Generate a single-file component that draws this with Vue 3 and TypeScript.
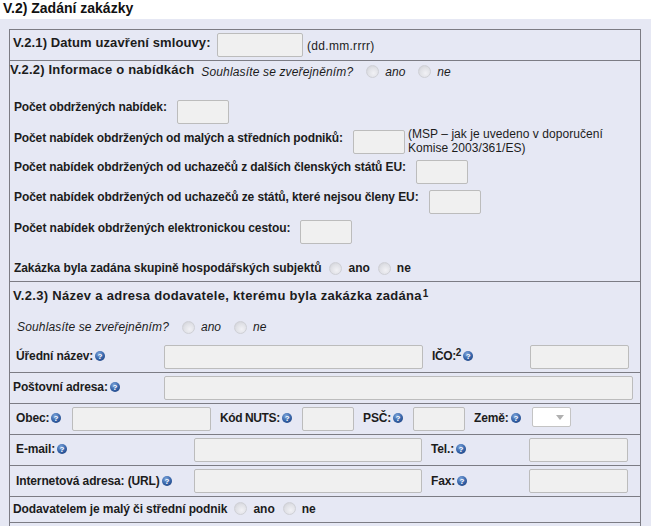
<script setup lang="ts">
const countRows = [
  { label: "Počet obdržených nabídek:" },
  { label: "Počet nabídek obdržených od malých a středních podniků:", note: true },
  { label: "Počet nabídek obdržených od uchazečů z dalších členských států EU:" },
  { label: "Počet nabídek obdržených od uchazečů ze států, které nejsou členy EU:" },
  { label: "Počet nabídek obdržených elektronickou cestou:" },
];
</script>

<template>
  <div class="page">
    <h2 class="title">V.2) Zadání zakázky</h2>
    <div class="panel">
      <div class="table">
        <div class="row row-date">
          <b class="head">V.2.1) Datum uzavření smlouvy:</b>
          <span class="field w86"></span>
          <span class="hint">(dd.mm.rrrr)</span>
        </div>

        <div class="row row-offers">
          <div class="offers-head">
            <b class="head">V.2.2) Informace o nabídkách</b>
            <i class="consent">Souhlasíte se zveřejněním?</i>
            <span class="radio r1"></span><i class="opt">ano</i>
            <span class="radio r2"></span><i class="opt">ne</i>
          </div>
          <div v-for="r in countRows" :key="r.label" class="count-row">
            <b class="count-label">{{ r.label }}</b>
            <span class="field w52"></span>
            <span v-if="r.note" class="note">(MSP – jak je uvedeno v doporučení<br />Komise 2003/361/ES)</span>
          </div>
          <div class="group-row">
            <b>Zakázka byla zadána skupině hospodářských subjektů</b>
            <span class="radio g1"></span><b class="opt">ano</b>
            <span class="radio g2"></span><b class="opt">ne</b>
          </div>
        </div>

        <div class="row row-name">
          <div class="name-head">
            <b class="head">V.2.3) Název a adresa dodavatele, kterému byla zakázka zadána</b><sup class="sup">1</sup>
          </div>
          <div class="name-consent">
            <i>Souhlasíte se zveřejněním?</i>
            <span class="radio n1"></span><i class="opt">ano</i>
            <span class="radio n2"></span><i class="opt">ne</i>
          </div>
          <div class="line">
            <b class="lbl l-name">Úřední název:<svg class="help" viewBox="0 0 10 10"><use href="#help" /></svg></b>
            <span class="field w259"></span>
            <b class="lbl l-ico">IČO:<sup class="sup-small">2</sup><svg class="help" viewBox="0 0 10 10"><use href="#help" /></svg></b>
            <span class="field w99"></span>
          </div>
        </div>

        <div class="row line-row">
          <b class="lbl l-post">Poštovní adresa:<svg class="help" viewBox="0 0 10 10"><use href="#help" /></svg></b>
          <span class="field w469"></span>
        </div>

        <div class="row line-row">
          <b class="lbl l-city">Obec:<svg class="help" viewBox="0 0 10 10"><use href="#help" /></svg></b>
          <span class="field w139"></span>
          <b class="lbl l-nuts">Kód NUTS:<svg class="help" viewBox="0 0 10 10"><use href="#help" /></svg></b>
          <span class="field w52"></span>
          <b class="lbl l-psc">PSČ:<svg class="help" viewBox="0 0 10 10"><use href="#help" /></svg></b>
          <span class="field w52"></span>
          <b class="lbl l-land">Země:<svg class="help" viewBox="0 0 10 10"><use href="#help" /></svg></b>
          <span class="select"><span class="arrow"></span></span>
        </div>

        <div class="row line-row">
          <b class="lbl l-mail">E-mail:<svg class="help" viewBox="0 0 10 10"><use href="#help" /></svg></b>
          <span class="field w228"></span>
          <b class="lbl l-tel">Tel.:<svg class="help" viewBox="0 0 10 10"><use href="#help" /></svg></b>
          <span class="field w99"></span>
        </div>

        <div class="row line-row">
          <b class="lbl l-url">Internetová adresa: (URL)<svg class="help" viewBox="0 0 10 10"><use href="#help" /></svg></b>
          <span class="field w228"></span>
          <b class="lbl l-fax">Fax:<svg class="help" viewBox="0 0 10 10"><use href="#help" /></svg></b>
          <span class="field w99"></span>
        </div>

        <div class="row row-small">
          <b class="small-text">Dodavatelem je malý či střední podnik</b>
          <span class="radio s1"></span><b class="opt">ano</b>
          <span class="radio s2"></span><b class="opt">ne</b>
        </div>

        <div class="row row-last"></div>
      </div>
    </div>

    <svg class="defs" width="0" height="0">
      <defs>
        <radialGradient id="helpFill" cx="40%" cy="30%" r="75%">
          <stop offset="0" stop-color="#7fa6dc" />
          <stop offset="0.6" stop-color="#3a68ac" />
          <stop offset="1" stop-color="#1f4585" />
        </radialGradient>
        <g id="help">
          <circle cx="5" cy="5" r="5" fill="url(#helpFill)" />
          <text x="5" y="8" text-anchor="middle" font-size="8" font-weight="700" font-family="Liberation Sans, sans-serif" fill="#fff">?</text>
        </g>
      </defs>
    </svg>
  </div>
</template>

<style>
html,
body {
  margin: 0;
  overflow: hidden;
  background: #fff;
}
</style>

<style scoped>
.page {
  width: 659px;
  height: 526px;
  overflow: hidden;
  font-family: "Liberation Sans", Arial, sans-serif;
  font-size: 12px;
  color: #1c1c1c;
}

.title {
  margin: 0;
  height: 19px;
  padding-left: 3px;
  font-size: 14px;
  line-height: 17px;
  color: #111;
}

.panel {
  width: 651px;
  height: 507px;
  padding: 10px 0 0 9px;
  box-sizing: border-box;
  background: #e6e8f4;
}

.table {
  width: 632px;
  border: 1px solid #7c7c84;
  border-bottom: 0;
  box-sizing: border-box;
}

.row {
  border-bottom: 1px solid #7c7c84;
  box-sizing: border-box;
}

.row-date {
  height: 31px;
  display: flex;
  align-items: flex-start;
  padding: 3px 0 0 3px;
}

.head {
  font-size: 13px;
  line-height: 18px;
  letter-spacing: 0.3px;
}

.row-date .head {
  padding-top: 1px;
  letter-spacing: 0.1px;
  width: 204px;
}

.offers-head .head {
  letter-spacing: 0.2px;
}

.hint {
  margin: 6px 0 0 4px;
  line-height: 15px;
  letter-spacing: 0.3px;
}

.field {
  display: block;
  flex: none;
  height: 24px;
  box-sizing: border-box;
  background: #f0f0f0;
  border: 1px solid #bcbcbc;
  border-radius: 2px;
}

.w52 { width: 52px; }
.w86 { width: 86px; }
.w99 { width: 99px; }
.w139 { width: 139px; }
.w228 { width: 228px; }
.w259 { width: 259px; }
.w469 { width: 469px; }

.row-offers {
  height: 221px;
}

.offers-head {
  display: flex;
  align-items: center;
  height: 17px;
  margin-bottom: 22px;
}

.consent {
  margin-left: 7px;
  letter-spacing: 0.15px;
}

.offers-head .consent,
.offers-head .radio,
.offers-head .opt {
  margin-top: 4px;
}

.radio {
  flex: none;
  display: block;
  width: 13px;
  height: 13px;
  box-sizing: border-box;
  border-radius: 50%;
  background: radial-gradient(circle at 60% 65%, #f1f1f5 0, #e0e1e6 55%, #cbccd2 100%);
  border: 1px solid #cfd0d6;
}

.opt {
  margin-left: 6px;
}

.r1 { margin-left: 13px; }
.r2 { margin-left: 13px; }

.count-row {
  display: flex;
  align-items: flex-start;
  height: 30px;
  padding-left: 4px;
}

.count-label {
  line-height: 15px;
  margin-right: 10px;
  letter-spacing: -0.13px;
}

.count-row:nth-child(3) .count-label,
.count-row:nth-child(6) .count-label {
  padding-top: 1px;
}

.count-row:nth-child(4) .count-label { letter-spacing: -0.115px; }
.count-row:nth-child(5) .count-label { letter-spacing: -0.1px; }
.count-row:nth-child(6) .count-label { letter-spacing: -0.065px; }

.note {
  margin-left: 3px;
  margin-top: -3px;
  line-height: 14px;
  letter-spacing: 0.05px;
}

.group-row {
  display: flex;
  align-items: center;
  height: 16px;
  margin-top: 10px;
  padding-left: 4px;
}

.group-row b:first-child {
  letter-spacing: -0.08px;
}

.g1 { margin-left: 8px; }
.g2 { margin-left: 8px; }

.row-name {
  height: 91px;
}

.name-head {
  height: 24px;
  padding: 5px 0 0 3px;
  box-sizing: border-box;
  display: flex;
  align-items: flex-start;
}

.sup {
  font-size: 10px;
  line-height: 10px;
  font-weight: 700;
  margin-top: 2px;
  margin-left: 1px;
}

.name-consent {
  display: flex;
  align-items: center;
  height: 16px;
  margin: 13px 0 10px 7px;
}

.name-consent > i:first-child {
  letter-spacing: 0.15px;
}

.n1 { margin-left: 13px; }
.n2 { margin-left: 13px; }

.line {
  display: flex;
  align-items: flex-start;
  height: 24px;
}

.line-row {
  height: 31px;
  padding-top: 3px;
  display: flex;
  align-items: flex-start;
}

.lbl {
  flex: none;
  display: flex;
  align-items: center;
  box-sizing: border-box;
  height: 15px;
  margin-top: 3px;
  white-space: nowrap;
  letter-spacing: -0.12px;
}

.help {
  width: 10px;
  height: 10px;
  margin-left: 2px;
  flex: none;
}

.sup-small {
  font-size: 10px;
  line-height: 9px;
  align-self: flex-start;
  font-weight: 700;
}

.l-name { width: 154px; padding-left: 6px; }
.l-ico { width: 107px; padding-left: 9px; letter-spacing: -0.4px; }
.l-post { width: 154px; padding-left: 3px; }
.l-city { width: 62px; padding-left: 6px; }
.l-nuts { width: 91px; padding-left: 9px; letter-spacing: -0.4px; }
.l-psc { width: 59px; padding-left: 9px; }
.l-land { width: 67px; padding-left: 9px; }
.l-mail { width: 184px; padding-left: 6px; }
.l-url { width: 184px; padding-left: 6px; margin-top: 4px; }
.l-tel { width: 107px; padding-left: 9px; }
.l-fax { width: 107px; padding-left: 9px; margin-top: 4px; }

.select {
  display: block;
  flex: none;
  width: 39px;
  height: 20px;
  box-sizing: border-box;
  background: #fff;
  border: 1px solid #c4c4c4;
  border-radius: 2px;
  position: relative;
}

.arrow {
  position: absolute;
  right: 6px;
  top: 7px;
  border-left: 4px solid transparent;
  border-right: 4px solid transparent;
  border-top: 5px solid #b0b0b0;
}

.row-small {
  height: 26px;
  display: flex;
  align-items: center;
  padding: 0 0 2px 3px;
}

.small-text {
  letter-spacing: -0.1px;
}

.s1 { margin-left: 7px; }
.s2 { margin-left: 8px; }

.row-last {
  height: 20px;
  border-bottom: 0;
}

.defs {
  position: absolute;
}
</style>
